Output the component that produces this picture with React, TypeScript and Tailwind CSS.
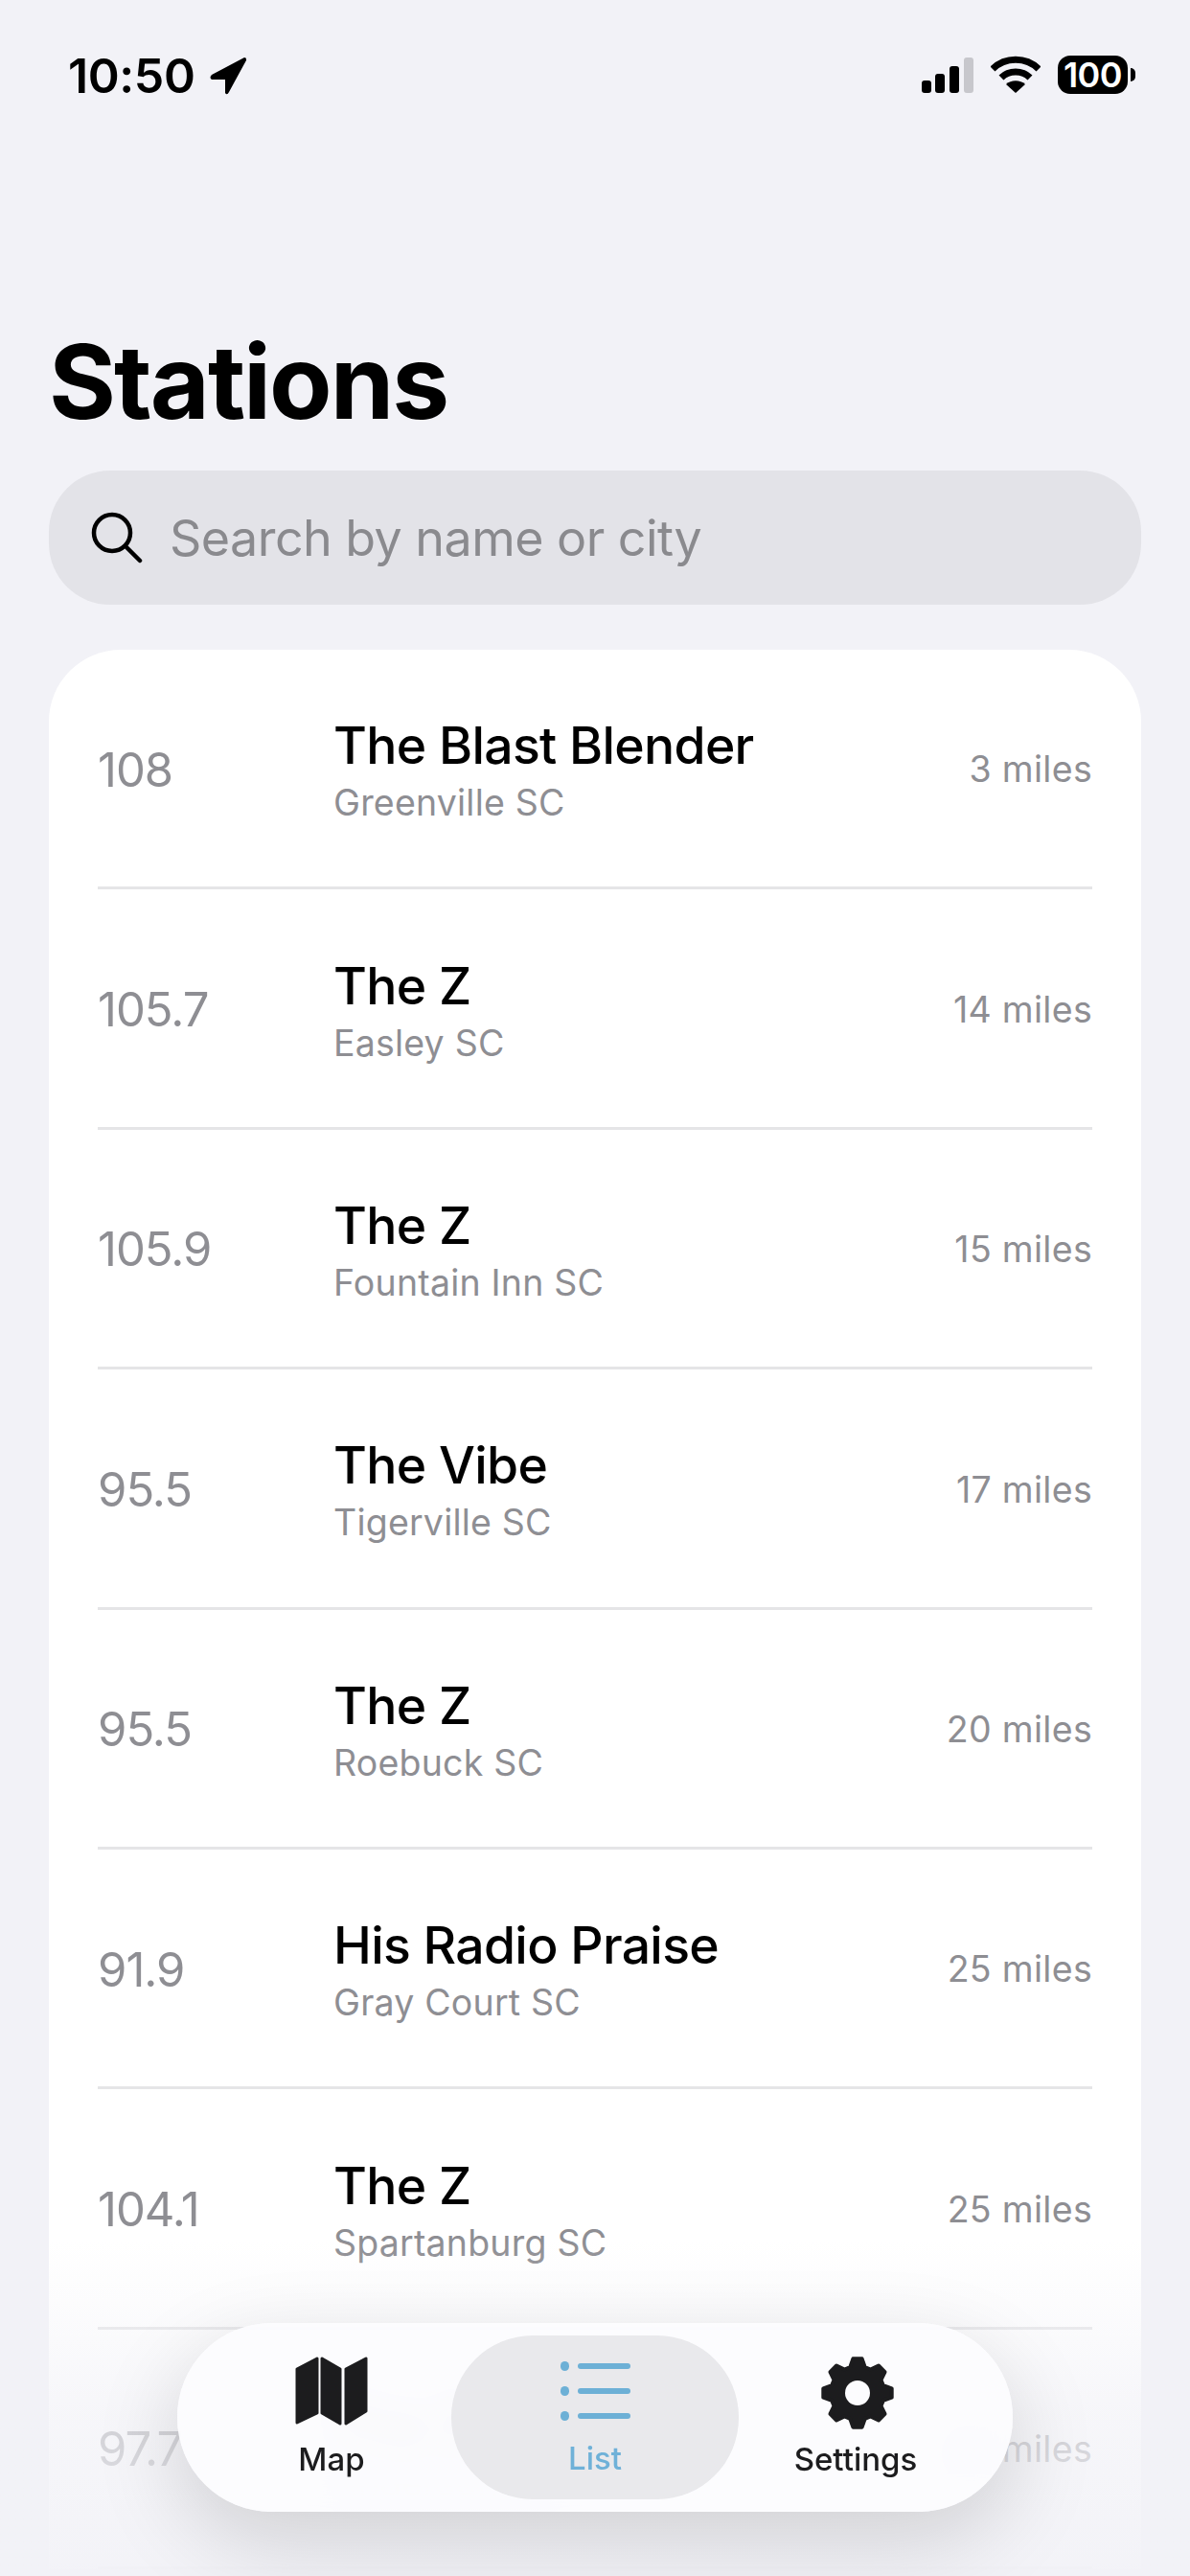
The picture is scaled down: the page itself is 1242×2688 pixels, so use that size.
const stations = [
  { freq: "108", name: "The Blast Blender", city: "Greenville SC", miles: "3 miles" },
  { freq: "105.7", name: "The Z", city: "Easley SC", miles: "14 miles" },
  { freq: "105.9", name: "The Z", city: "Fountain Inn SC", miles: "15 miles" },
  { freq: "95.5", name: "The Vibe", city: "Tigerville SC", miles: "17 miles" },
  { freq: "95.5", name: "The Z", city: "Roebuck SC", miles: "20 miles" },
  { freq: "91.9", name: "His Radio Praise", city: "Gray Court SC", miles: "25 miles" },
  { freq: "104.1", name: "The Z", city: "Spartanburg SC", miles: "25 miles" },
  { freq: "97.7", name: "The Z", city: "Anderson SC", miles: "26 miles" },
];

function gearPath() {
  const cx = 39;
  const cy = 38;
  const pts: string[] = [];
  for (let i = 0; i < 8; i++) {
    const a = (i * Math.PI) / 4 - Math.PI / 2;
    const p = (r: number, d: number) => {
      const x = cx + r * Math.cos(a + d);
      const y = cy + r * Math.sin(a + d);
      return `${x.toFixed(2)} ${y.toFixed(2)}`;
    };
    pts.push(p(28, -0.28), p(36, -0.13), p(36, 0.13), p(28, 0.28));
  }
  return `M${pts.join("L")}Z`;
}

function StatusBar() {
  return (
    <div className="flex h-[160px] items-start justify-between pl-[71px] pr-[57px] pt-[58px]">
      <div className="flex items-center gap-[14px]">
        <span className="text-[50px] leading-[42px] font-semibold tracking-[-0.4px] text-black">10:50</span>
        <svg width="40" height="40" viewBox="0 0 40 40">
          <path d="M37 1 L3 19 Q0 22 3 24 L17 24 L17 38 Q19 41 21 37 L39 4 Q39.5 1 37 1Z" fill="#000" />
        </svg>
      </div>
      <div className="flex items-center">
        <svg width="54" height="38" viewBox="0 0 54 38" className="mt-[2px]">
          <rect x="0" y="24" width="10" height="13" rx="3" fill="#000" />
          <rect x="14" y="17" width="10" height="20" rx="3" fill="#000" />
          <rect x="29" y="9" width="10" height="28" rx="3" fill="#000" />
          <rect x="44" y="0" width="10" height="37" rx="3" fill="#c7c7cc" />
        </svg>
        <svg width="52" height="40" viewBox="0 0 52 40" className="ml-[18px]">
          <path d="M2 14 C15 1 37 1 50 14" fill="none" stroke="#000" strokeWidth="7" strokeLinecap="butt" />
          <path d="M11 23 C19 15 33 15 41 23" fill="none" stroke="#000" strokeWidth="7" />
          <path d="M26 39 L16 30 C21 25 31 25 36 30Z" fill="#000" />
        </svg>
        <div className="ml-[18px] flex h-[40px] w-[73px] items-center justify-center rounded-[13px] bg-black text-[36px] leading-none font-semibold tracking-[-0.5px] text-white">
          100
        </div>
        <div className="ml-[3px] h-[14px] w-[5px] rounded-r-full bg-black" />
      </div>
    </div>
  );
}

function SearchBar() {
  return (
    <div className="flex h-[140px] items-center rounded-[64px] bg-[#e3e3e8] pl-[44px]">
      <svg width="54" height="54" viewBox="0 0 54 54" fill="none" stroke="#000" strokeWidth="4.5" strokeLinecap="round">
        <circle cx="22" cy="22" r="19" />
        <path d="M36 36 L51 51" />
      </svg>
      <span className="ml-[28px] pt-[1px] text-[52px] leading-none tracking-[-0.55px] text-[#8a8a8e]">Search by name or city</span>
    </div>
  );
}

function StationRow({ freq, name, city, miles }: (typeof stations)[number]) {
  return (
    <div className="flex h-[250.4px] items-center border-b-[3px] border-[#e5e5e7]">
      <div className="w-[246px] pt-[3px] text-[49px] leading-none tracking-[-1px] text-[#8e8e93]">{freq}</div>
      <div className="flex-1 pt-[4px]">
        <div className="text-[53.5px] leading-[62px] font-medium tracking-[-0.7px] text-black">{name}</div>
        <div className="mt-[7px] text-[37.5px] leading-[44px] tracking-[0.2px] text-[#8e8e93]">{city}</div>
      </div>
      <div className="pt-[3px] text-[37.5px] leading-none tracking-[0.3px] text-[#8e8e93]">{miles}</div>
    </div>
  );
}

function TabBar() {
  return (
    <div className="absolute left-[185px] top-[2424px] flex h-[197px] w-[872px] items-center rounded-[98px] bg-[#fcfcfe]/92 pl-[36px] pr-[42px] shadow-[0_30px_90px_rgba(0,0,0,0.15)] backdrop-blur-lg">
      <div className="flex w-[250px] flex-col items-center">
        <svg width="76" height="72" viewBox="0 0 76 72" fill="#1c1c1e" stroke="#1c1c1e" strokeWidth="3" strokeLinejoin="round">
          <path d="M23 2 L2 13 L2 69 L23 59Z" />
          <path d="M28 2 L47 13 L47 70 L28 59Z" />
          <path d="M53 13 L74 2 L74 57 L53 70Z" />
        </svg>
        <span className="mt-[15px] text-[33px] leading-[40px] font-medium text-[#1c1c1e]">Map</span>
      </div>
      <div className="flex h-[171px] w-[300px] flex-col items-center justify-center rounded-[85px] bg-[#e9e9ec]">
        <div className="flex h-[70px] w-[73px] flex-col justify-center gap-[16px]">
          {[0, 1, 2].map((i) => (
            <div key={i} className="flex items-center gap-[9px]">
              <div className="h-[10px] w-[9px] rounded-full bg-[#6db0d6]" />
              <div className="h-[6px] flex-1 rounded-full bg-[#6db0d6]" />
            </div>
          ))}
        </div>
        <span className="mt-[15px] text-[33px] leading-[40px] font-medium text-[#6fb1d8]">List</span>
      </div>
      <div className="flex w-[244px] flex-col items-center">
        <svg width="78" height="76" viewBox="0 0 78 76" fill="#1c1c1e" className="ml-[3px]">
          <path d={gearPath()} fillRule="evenodd" stroke="#1c1c1e" strokeWidth="4" strokeLinejoin="round" />
          <circle cx="39" cy="38" r="13" fill="#fcfcfe" />
        </svg>
        <span className="mt-[11px] text-[33px] leading-[40px] font-medium text-[#1c1c1e]">Settings</span>
      </div>
    </div>
  );
}

export default function App() {
  return (
    <div className="relative h-[2688px] w-[1242px] overflow-hidden bg-[#f2f2f7] font-['Inter',sans-serif]">
      <StatusBar />
      <div className="px-[51px]">
        <h1 className="mt-[183px] text-[107px] leading-[110px] font-bold tracking-[-2px] text-black">Stations</h1>
        <div className="mt-[38px]">
          <SearchBar />
        </div>
        <div className="mt-[47px] rounded-t-[75px] bg-white px-[51px]">
          {stations.map((s, i) => (
            <StationRow key={i} {...s} />
          ))}
        </div>
      </div>
      <div className="absolute inset-x-0 bottom-0 h-[350px] bg-gradient-to-b from-[#f2f2f7]/0 via-[#f2f2f7]/65 to-[#f2f2f7]/95" />
      <TabBar />
    </div>
  );
}
